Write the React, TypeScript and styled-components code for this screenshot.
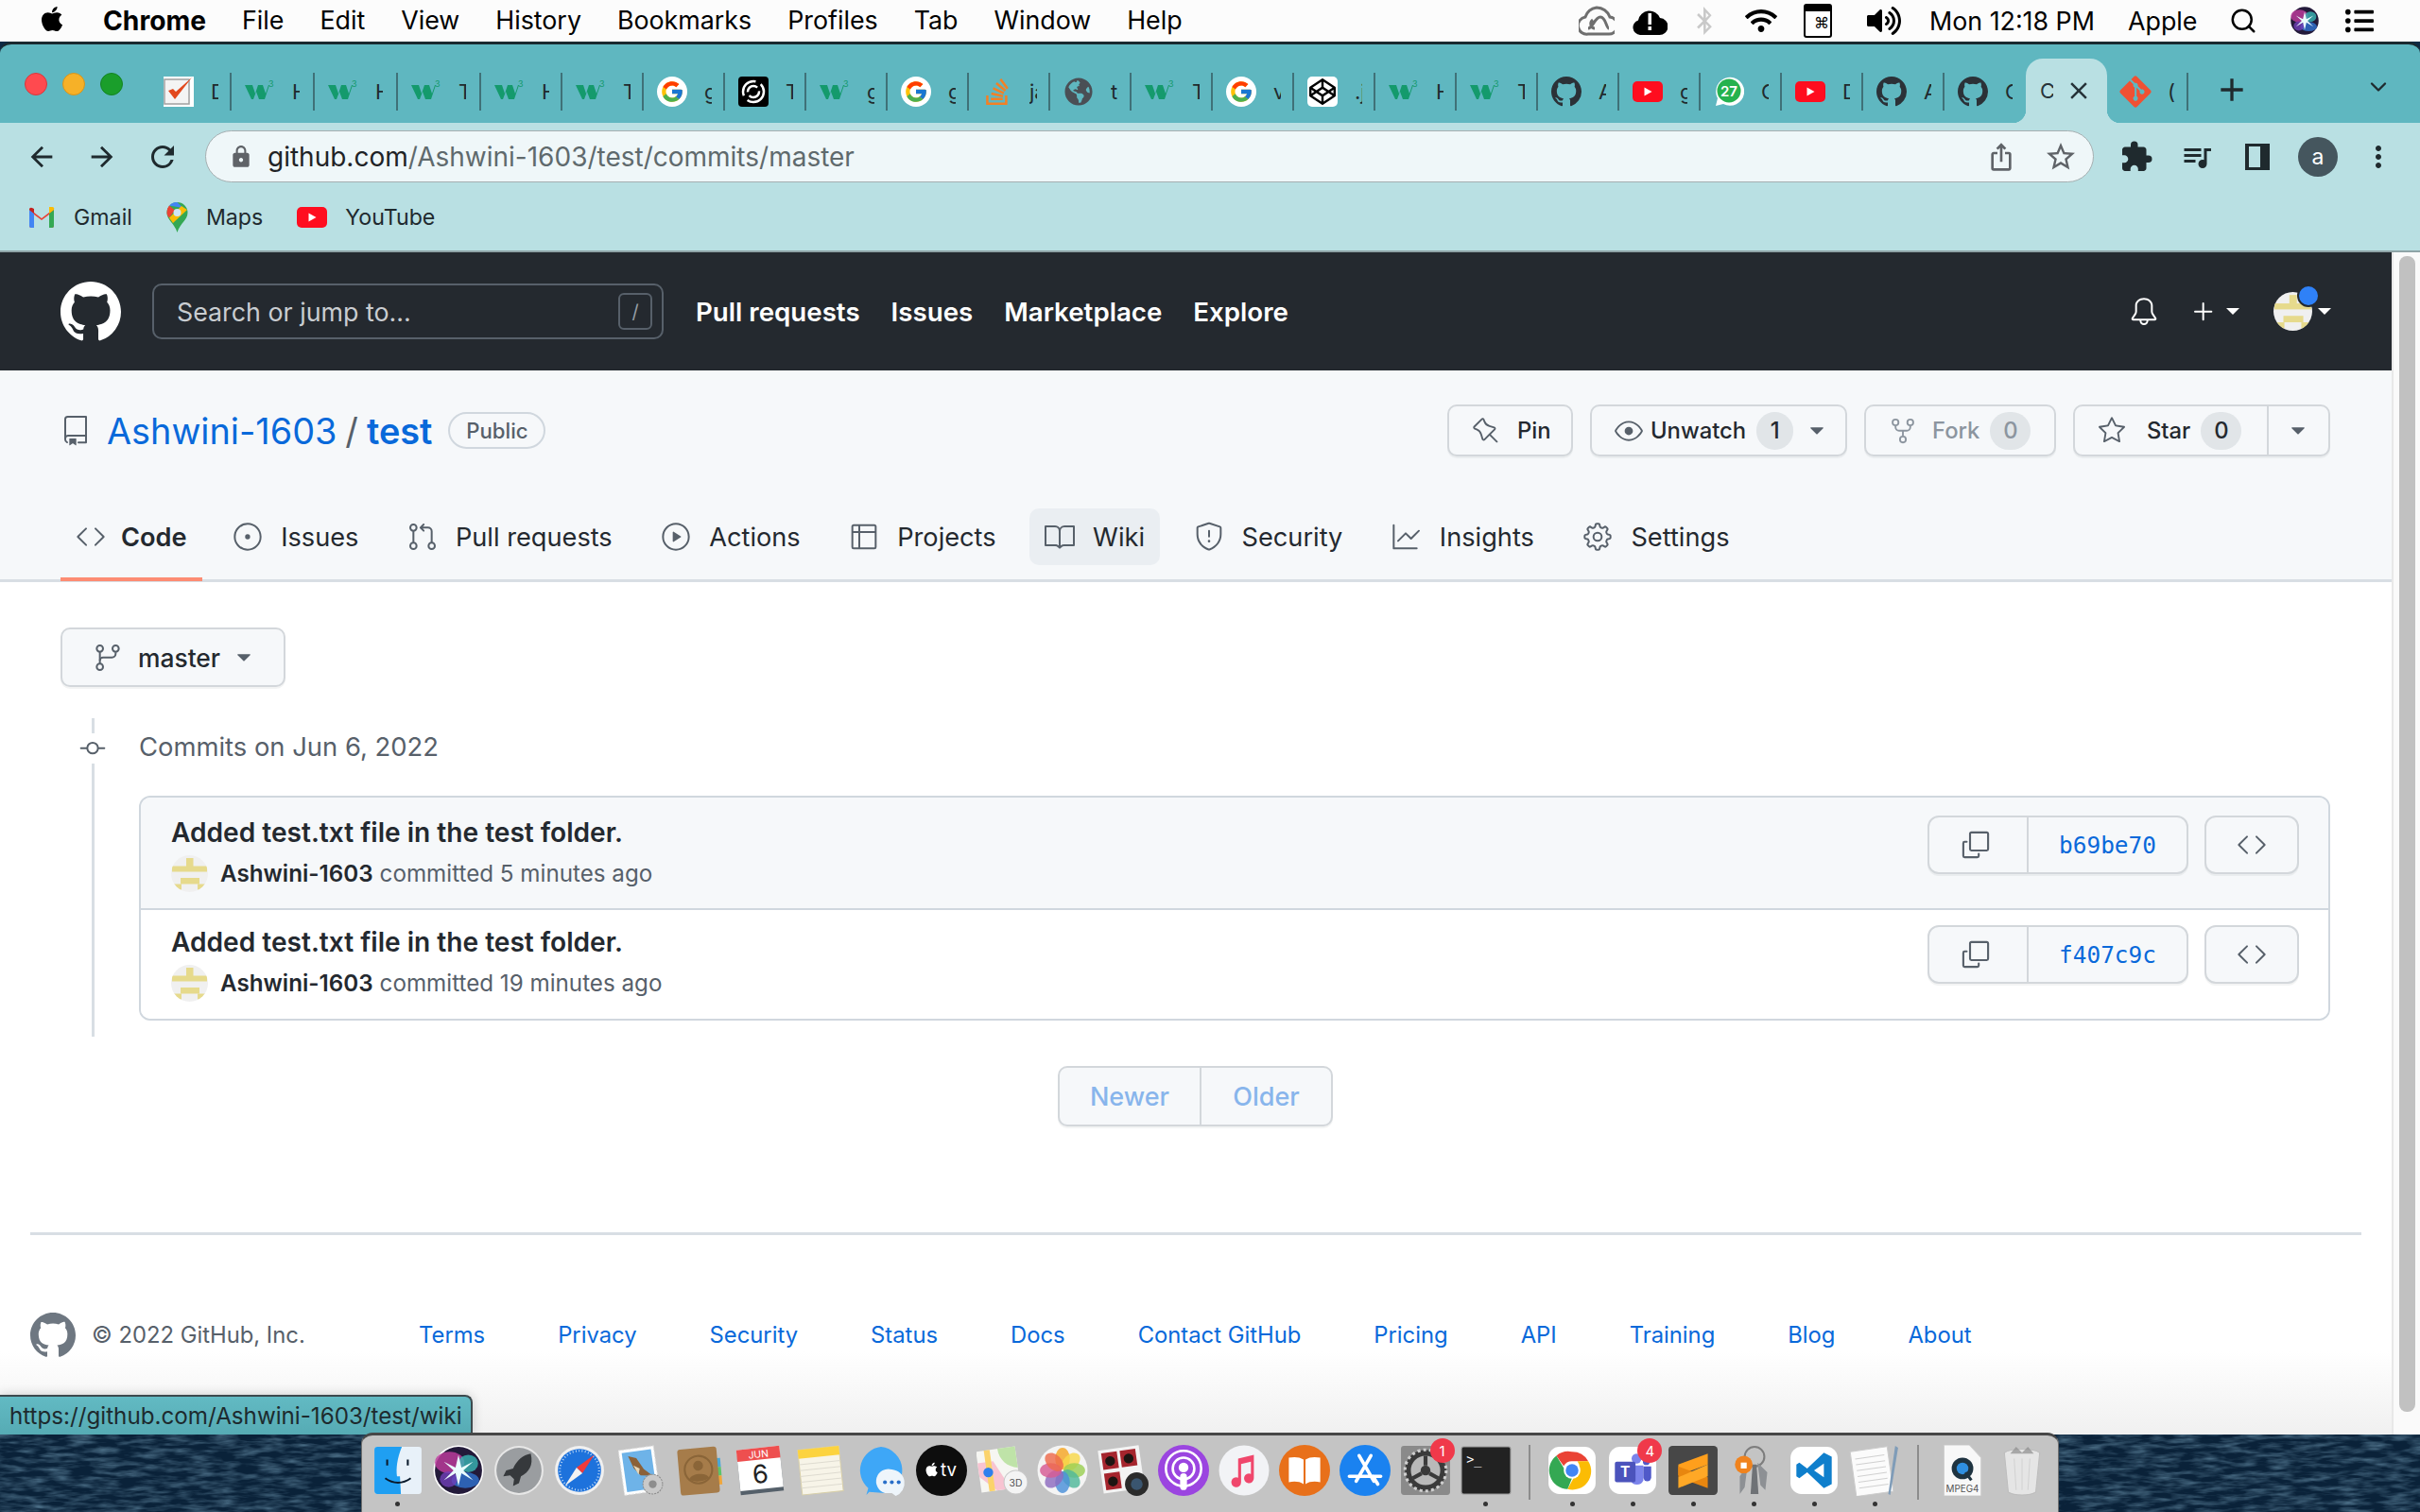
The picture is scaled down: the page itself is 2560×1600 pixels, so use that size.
import React from 'react';
import styled, { createGlobalStyle } from 'styled-components';
import { FaApple, FaWifi, FaBluetoothB, FaVolumeUp, FaListUl, FaCodepen, FaStackOverflow, FaGitAlt, FaGlobeAmericas } from 'react-icons/fa';
import { FcGoogle } from 'react-icons/fc';
import { FiSearch, FiChevronDown } from 'react-icons/fi';
import { MdArrowBack, MdArrowForward, MdRefresh, MdLock, MdExtension, MdQueueMusic, MdMoreVert, MdAdd, MdClose, MdStarBorder, MdIosShare } from 'react-icons/md';
import {
  GoBell, GoPlus, GoRepo, GoPin, GoEye, GoRepoForked, GoStar, GoTriangleDown, GoCode, GoIssueOpened,
  GoGitPullRequest, GoPlay, GoTable, GoBook, GoShield, GoGraph, GoGear, GoGitBranch, GoGitCommit, GoCopy,
} from 'react-icons/go';

const Global = createGlobalStyle`
  html, body { margin: 0; padding: 0; background: #0d2a44; }
  * { box-sizing: border-box; }
  body { font-family: Inter, "Liberation Sans", sans-serif; }
  a { text-decoration: none; color: inherit; }
  svg { display: block; flex: none; }
`;

const Screen = styled.div`
  width: 2560px;
  height: 1600px;
  display: flex;
  flex-direction: column;
  overflow: hidden;
`;

/* mac menu bar */
const MenuBar = styled.div`
  height: 44px;
  flex: none;
  background: #fcfcfc;
  display: flex;
  align-items: center;
  padding: 0 0 0 40px;
  font-size: 26.8px;
  color: #000;
`;

const AppleSlot = styled.div`
  margin-top: -4px;
  margin-right: 39px;
`;

const MenuLeft = styled.div`
  display: flex;
  gap: 38px;
`;

const MenuItem = styled.span<{ $bold?: boolean }>`
  font-weight: ${p => (p.$bold ? 700 : 400)};
  font-size: ${p => (p.$bold ? '28.2px' : 'inherit')};
`;

const MenuRight = styled.div`
  margin-left: auto;
  display: flex;
  align-items: center;
`;

const StatusSlot = styled.div<{ $w: number }>`
  width: ${p => p.$w}px;
  display: flex;
  justify-content: center;
  align-items: center;
`;

const Clock = styled.span`
  width: 180px;
  margin-left: 8px;
  white-space: nowrap;
`;

const AppleLabel = styled.span`
  margin-left: 30px;
  width: 89px;
`;

/* browser window */
const Window = styled.div`
  width: 2560px;
  height: 1474px;
  flex: none;
  background: #5fb7c0;
  border-top: 3px solid #1a2a30;
  border-radius: 12px 12px 0 0;
  display: flex;
  flex-direction: column;
  position: relative;
  overflow: hidden;
`;

const TabStrip = styled.div`
  height: 83px;
  flex: none;
  display: flex;
  align-items: flex-end;
`;

const Lights = styled.div`
  display: flex;
  gap: 16px;
  padding: 0 29px 29px 26px;
`;

const Light = styled.span<{ $c: string; $b: string }>`
  width: 24px;
  height: 24px;
  border-radius: 50%;
  background: ${p => p.$c};
  border: 1px solid ${p => p.$b};
`;

const Tab = styled.div<{ $w: number; $sep?: boolean }>`
  width: ${p => p.$w}px;
  height: 53px;
  padding: 0 0 13px 14px;
  display: flex;
  align-items: center;
  position: relative;
  color: #1f2a2e;
  font-size: 22px;
  ${p => (p.$sep === false ? '' : `
    &::after {
      content: '';
      position: absolute;
      right: 0;
      top: 0;
      width: 2px;
      height: 40px;
      background: #3f7178;
    }
  `)}
`;

const ActiveTab = styled.div`
  width: 86px;
  height: 68px;
  padding: 0 0 0 15px;
  position: relative;
  background: #b9e0e3;
  border-radius: 18px 18px 0 0;
  display: flex;
  align-items: center;
  gap: 12px;
  color: #27343a;
  font-size: 22px;
  &::before, &::after {
    content: '';
    position: absolute;
    bottom: 0;
    width: 14px;
    height: 14px;
  }
  &::before {
    left: -14px;
    background: radial-gradient(circle at 0 0, transparent 14px, #b9e0e3 14.5px);
  }
  &::after {
    right: -14px;
    background: radial-gradient(circle at 100% 0, transparent 14px, #b9e0e3 14.5px);
  }
`;

const ActiveTabText = styled.span`
  width: 14px;
  overflow: hidden;
`;

const TabText = styled.span`
  width: 8px;
  margin-left: 18px;
  overflow: hidden;
  white-space: nowrap;
`;

const StripPlus = styled.div`
  padding: 0 0 15px 26px;
`;

const StripChevron = styled.div`
  margin-left: auto;
  padding: 0 30px 24px 0;
`;

const Favicon = styled.div`
  width: 32px;
  height: 32px;
  display: flex;
  align-items: center;
  justify-content: center;
`;

const GoogleFav = styled(Favicon)`
  background: #fff;
  border-radius: 50%;
`;

const CodepenFav = styled(Favicon)`
  background: #fff;
  border-radius: 5px;
`;

/* toolbar */
const Toolbar = styled.div`
  height: 137px;
  flex: none;
  background: #b9e0e3;
  border-bottom: 2px solid #8fa4a7;
`;

const NavRow = styled.div`
  height: 71px;
  display: flex;
  align-items: center;
  padding-left: 28px;
  color: #1f2a2e;
`;

const NavBtn = styled.div`
  width: 32px;
  margin-right: 32px;
  display: flex;
  justify-content: center;
`;

const Omnibox = styled.div`
  width: 1998px;
  height: 55px;
  margin: 0 13px 0 -3px;
  border-radius: 28px;
  background: #eff7f9;
  border: 1px solid #a5aeb0;
  box-shadow: inset 0 0 0 1px #eff7f9;
  display: flex;
  align-items: center;
  padding: 0 3px 0 24px;
  font-size: 28px;
  color: #5f6a6d;
`;

const Url = styled.span`
  margin-left: 15px;
  flex: 1;
`;

const UrlHost = styled.span`
  color: #1f2326;
`;

const OmniAction = styled.div`
  width: 63px;
  display: flex;
  justify-content: center;
  color: #5f6368;
`;

const ToolSlot = styled.div`
  width: 64px;
  display: flex;
  justify-content: center;
  color: #1f2a2e;
`;

const PanelIcon = styled.div`
  width: 26px;
  height: 28px;
  border: 3px solid #1f2a2e;
  border-left-width: 4px;
  border-right-width: 10px;
`;

const ProfileDot = styled.div`
  width: 42px;
  height: 42px;
  border-radius: 50%;
  background: #45565e;
  color: #fff;
  font-size: 23px;
  display: flex;
  align-items: center;
  justify-content: center;
`;

const BookmarkRow = styled.div`
  display: flex;
  align-items: center;
  height: 58px;
  padding-left: 29px;
  font-size: 23.2px;
  color: #1f2a2e;
`;

const Bookmark = styled.a`
  display: flex;
  align-items: center;
  gap: 19px;
  margin-right: 36px;
`;

/* page */
const PageRow = styled.div`
  flex: 1;
  display: flex;
  min-height: 0;
`;

const Page = styled.div`
  width: 2530px;
  display: flex;
  flex-direction: column;
  position: relative;
  background: linear-gradient(#fff 93%, #f0f0f0 100%);
`;

const ScrollTrack = styled.div`
  width: 30px;
  background: #fafafa;
  border-left: 2px solid #e8e8e8;
  padding: 4px 5px 24px 6px;
`;

const ScrollThumb = styled.div`
  height: 100%;
  background: #c1c1c1;
  border-radius: 8px;
`;

const Header = styled.header`
  height: 125px;
  flex: none;
  background: #24292f;
  display: flex;
  align-items: center;
  padding: 0 64px 0 64px;
  color: #fff;
`;

const Search = styled.div`
  width: 541px;
  height: 59px;
  margin: 0 34px 0 33px;
  border: 2px solid #57606a;
  border-radius: 10px;
  display: flex;
  align-items: center;
  justify-content: space-between;
  padding: 0 10px 0 24px;
  font-size: 26.8px;
  color: #c9cdd1;
`;

const SlashKey = styled.span`
  width: 36px;
  height: 39px;
  border: 2px solid #57606a;
  border-radius: 6px;
  display: flex;
  align-items: center;
  justify-content: center;
  font-size: 20px;
  color: #959da5;
`;

const HeaderNav = styled.nav`
  display: flex;
  gap: 33px;
  font-size: 27.7px;
  font-weight: 600;
`;

const HeaderRight = styled.div`
  margin-left: auto;
  display: flex;
  align-items: center;
`;

const HeadCaret = styled.span<{ $gap: number }>`
  margin-left: ${p => p.$gap}px;
  width: 0;
  height: 0;
  border: 7px solid transparent;
  border-top-color: #fff;
  border-bottom: 0;
`;

const PlusGroup = styled.div`
  display: flex;
  align-items: center;
  margin: 0 36px 0 31px;
`;

const HeadAvatar = styled.div`
  position: relative;
`;

const UnreadDot = styled.span`
  position: absolute;
  right: -8px;
  top: -8px;
  width: 24px;
  height: 24px;
  border-radius: 50%;
  background: #2f81f7;
  border: 2px solid #24292f;
`;

const RepoHead = styled.div`
  height: 224px;
  flex: none;
  background: #f6f8fa;
  border-bottom: 3px solid #d8dee4;
  padding: 36px 65px 0 64px;
  display: flex;
  flex-direction: column;
`;

const RepoTop = styled.div`
  display: flex;
  align-items: center;
  height: 55px;
  justify-content: space-between;
`;

const RepoTitle = styled.div`
  display: flex;
  align-items: center;
  font-size: 37.8px;
  color: #57606a;
`;

const OwnerLink = styled.a`
  margin-left: 17px;
  color: #0969da;
`;

const TitleSep = styled.span`
  margin: 0 9px 0 9px;
`;

const NameLink = styled.a`
  color: #0969da;
  font-weight: 600;
`;

const PublicBadge = styled.span`
  margin-left: 17px;
  height: 39px;
  width: 103px;
  display: flex;
  align-items: center;
  justify-content: center;
  border: 2px solid #d0d7de;
  border-radius: 20px;
  font-size: 22.2px;
  font-weight: 500;
  color: #57606a;
`;

const RepoActions = styled.div`
  display: flex;
  gap: 18px;
`;

const ActionBtn = styled.button<{ $w: number; $muted?: boolean }>`
  width: ${p => p.$w}px;
  height: 55px;
  padding: 0 0 0 24px;
  background: #f6f8fa;
  border: 2px solid #d3d7db;
  border-radius: 10px;
  box-shadow: 0 2px 0 rgba(27, 31, 36, 0.05);
  display: flex;
  align-items: center;
  font: 500 23.8px Inter, sans-serif;
  color: ${p => (p.$muted ? '#8c959f' : '#24292f')};
`;

const BtnLabel = styled.span<{ $l: number }>`
  margin-left: ${p => p.$l}px;
`;

const Counter = styled.span<{ $l: number; $w: number }>`
  margin-left: ${p => p.$l}px;
  width: ${p => p.$w}px;
  height: 40px;
  border-radius: 20px;
  background: rgba(175, 184, 193, 0.3);
  display: flex;
  align-items: center;
  justify-content: center;
`;

const BtnCaret = styled.span<{ $l: number }>`
  margin-left: ${p => p.$l}px;
  color: #57606a;
`;

const StarSplit = styled.span`
  margin-left: 27px;
  width: 63px;
  height: 51px;
  border-left: 2px solid #d3d7db;
  display: flex;
  align-items: center;
  justify-content: center;
  color: #57606a;
`;

const RepoTabs = styled.nav`
  margin-top: 55px;
  display: flex;
  gap: 19.5px;
  font-size: 27.2px;
  color: #24292f;
`;

const RepoTab = styled.a<{ $active?: boolean; $hover?: boolean }>`
  height: 60px;
  padding: 0 16px;
  display: flex;
  align-items: center;
  gap: ${p => (p.$active ? 16 : 19)}px;
  position: relative;
  border-radius: 10px;
  background: ${p => (p.$hover ? '#eaeef2' : 'transparent')};
  font-weight: ${p => (p.$active ? 600 : 400)};
  svg { color: #57606a; }
  ${p => p.$active && `
    margin-right: -3px;
    &::after {
      content: '';
      position: absolute;
      left: 0;
      right: 0;
      bottom: -17px;
      height: 4px;
      background: #fd8c73;
    }
  `}
`;

const Content = styled.main`
  padding: 48px 65px 0 64px;
`;

const BranchBtn = styled.button`
  width: 238px;
  height: 63px;
  background: #f6f8fa;
  border: 2px solid #d3d7db;
  border-radius: 10px;
  box-shadow: 0 2px 0 rgba(27, 31, 36, 0.05);
  display: flex;
  align-items: center;
  padding-left: 32px;
  font: 500 26.4px Inter, sans-serif;
  color: #24292f;
`;

const BranchName = styled.span`
  margin: 0 12px 0 16px;
`;

const Timeline = styled.div`
  margin-top: 33px;
  padding: 0 0 17px 83px;
  position: relative;
  &::before {
    content: '';
    position: absolute;
    left: 33px;
    top: 0;
    bottom: 0;
    width: 3px;
    background: #d8dee4;
  }
`;

const DayHeader = styled.div`
  height: 60px;
  margin-bottom: 22px;
  display: flex;
  align-items: center;
  font-size: 27.4px;
  color: #57606a;
  position: relative;
`;

const DayIcon = styled.div`
  margin: 4px 33px 0 -65px;
  width: 32px;
  height: 32px;
  background: #fff;
  color: #57606a;
`;

const CommitBox = styled.div`
  border: 2px solid #d0d7de;
  border-radius: 12px;
  overflow: hidden;
`;

const CommitRow = styled.div<{ $first?: boolean }>`
  display: flex;
  justify-content: space-between;
  padding: ${p => (p.$first ? '19px 31px 17px 32px' : '16px 31px 18px 32px')};
  background: ${p => (p.$first ? '#f6f8fa' : '#fff')};
  border-top: ${p => (p.$first ? 'none' : '2px solid #d0d7de')};
`;

const CommitTitle = styled.a`
  display: block;
  height: 36px;
  line-height: 36px;
  font-size: 28.1px;
  font-weight: 600;
  color: #24292f;
`;

const CommitMeta = styled.div`
  margin-top: 6px;
  height: 39px;
  display: flex;
  align-items: center;
  font-size: 24.2px;
  color: #57606a;
`;

const Author = styled.a`
  margin: 0 7px 0 13px;
  font-weight: 600;
  color: #24292f;
`;

const CommitActions = styled.div`
  display: flex;
  gap: 17px;
`;

const BtnGroup = styled.div`
  width: 276px;
  height: 62px;
  display: flex;
  background: #f6f8fa;
  border: 2px solid #d3d7db;
  border-radius: 12px;
  box-shadow: 0 2px 0 rgba(27, 31, 36, 0.05);
`;

const CopyCell = styled.div`
  width: 105px;
  padding-right: 6px;
  border-right: 2px solid #d3d7db;
  display: flex;
  align-items: center;
  justify-content: center;
  color: #57606a;
`;

const ShaCell = styled.a`
  flex: 1;
  display: flex;
  align-items: center;
  justify-content: center;
  font: 24.4px "DejaVu Sans Mono", monospace;
  color: #0969da;
`;

const CodeBtn = styled.div`
  width: 100px;
  height: 62px;
  background: #f6f8fa;
  border: 2px solid #d3d7db;
  border-radius: 12px;
  box-shadow: 0 2px 0 rgba(27, 31, 36, 0.05);
  display: flex;
  align-items: center;
  justify-content: center;
  color: #57606a;
`;

const Pager = styled.div`
  margin: 31px auto 0;
  width: 291px;
  height: 64px;
  display: flex;
  background: #f6f8fa;
  border: 2px solid #d3d7db;
  border-radius: 10px;
  box-shadow: 0 2px 0 rgba(27, 31, 36, 0.05);
  font-size: 27px;
  font-weight: 500;
  color: #88b5ec;
`;

const PagerCell = styled.span<{ $w: number; $line?: boolean }>`
  width: ${p => p.$w}px;
  display: flex;
  align-items: center;
  justify-content: center;
  border-right: ${p => (p.$line ? '2px solid #d3d7db' : 'none')};
`;

const Footer = styled.footer`
  margin: 112px 32px 0;
  border-top: 3px solid #d8dee4;
  padding-top: 81px;
  display: flex;
  align-items: center;
  font-size: 23.8px;
  line-height: 50px;
  color: #57606a;
`;

const FooterCopy = styled.span`
  margin-left: 17px;
  width: 346px;
`;

const FooterLinks = styled.div`
  display: flex;
  gap: 77px;
  color: #0969da;
`;

const StatusTip = styled.div`
  position: absolute;
  left: 0;
  bottom: 0;
  width: 500px;
  height: 42px;
  padding-left: 10px;
  background: linear-gradient(#62bac3, #56abb4);
  border-top: 2px solid #3d4a4e;
  border-right: 2px solid #3d4a4e;
  border-radius: 0 8px 0 0;
  box-shadow: 0 0 12px rgba(0, 0, 0, 0.18);
  display: flex;
  align-items: center;
  font-size: 24.2px;
  color: #1d2a2e;
`;

/* wallpaper and dock */
const Desktop = styled.div`
  flex: 1;
  display: flex;
  justify-content: center;
  position: relative;
  background-color: #0a2239;
`;

const WallpaperArt = styled.svg`
  position: absolute;
  inset: 0;
  width: 100%;
  height: 100%;
`;

const Dock = styled.div`
  width: 1796px;
  height: 85px;
  margin-top: -2px;
  padding: 10px 6px 0;
  display: flex;
  position: relative;
  background: #c4c4c4;
  border-top: 3px solid #474747;
  border-left: 1px solid #6e6e6e;
  border-right: 1px solid #6e6e6e;
  border-radius: 12px 12px 0 0;
`;

const DockSlot = styled.div`
  width: 64px;
  display: flex;
  flex-direction: column;
  align-items: center;
  position: relative;
`;

const DockDot = styled.span`
  width: 5px;
  height: 5px;
  margin-top: 6px;
  border-radius: 50%;
  background: #333;
`;

const DockBadge = styled.span`
  position: absolute;
  right: 1px;
  top: -7px;
  width: 26px;
  height: 26px;
  border-radius: 50%;
  background: #f0394a;
  color: #fff;
  font-size: 15px;
  display: flex;
  align-items: center;
  justify-content: center;
`;

const DockDivider = styled.div`
  width: 28px;
  display: flex;
  justify-content: center;
  &::after {
    content: '';
    width: 2px;
    height: 58px;
    background: #8c8c8c;
  }
`;

const DockSvg: React.FC<{ children: React.ReactNode }> = ({ children }) => (
  <svg width="54" height="54" viewBox="0 0 52 52">{children}</svg>
);

const OctoMark: React.FC<{ size: number; color?: string }> = ({ size, color = 'currentColor' }) => (
  <svg width={size} height={size} viewBox="0 0 16 16" fill={color}>
    <path d="M8 0C3.58 0 0 3.58 0 8c0 3.54 2.29 6.53 5.47 7.59.4.07.55-.17.55-.38 0-.19-.01-.82-.01-1.49-2.01.37-2.53-.49-2.69-.94-.09-.23-.48-.94-.82-1.13-.28-.15-.68-.52-.01-.53.63-.01 1.08.58 1.23.82.72 1.21 1.87.87 2.33.66.07-.52.28-.87.51-1.07-1.78-.2-3.64-.89-3.64-3.95 0-.87.31-1.59.82-2.15-.08-.2-.36-1.02.08-2.12 0 0 .67-.21 2.2.82.64-.18 1.32-.27 2-.27.68 0 1.36.09 2 .27 1.53-1.04 2.2-.82 2.2-.82.44 1.1.16 1.92.08 2.12.51.56.82 1.27.82 2.15 0 3.07-1.87 3.75-3.65 3.95.29.25.54.73.54 1.48 0 1.07-.01 1.93-.01 2.2 0 .21.15.46.55.38A8.013 8.013 0 0016 8c0-4.42-3.58-8-8-8z" />
  </svg>
);

const W3Fav = () => (
  <svg width="32" height="32" viewBox="0 0 32 32">
    <path d="M0 9h8l3 9 3-9h5l3 9 3-9h1l-5 15h-6l-3-8-3 8H7z" fill="#149a6c" />
    <text x="25" y="11" fontSize="9" fill="#149a6c" fontFamily="Inter">3</text>
  </svg>
);

const TodoFav = () => (
  <svg width="32" height="32" viewBox="0 0 32 32">
    <rect width="32" height="32" fill="#fff" />
    <rect x="1" y="3" width="26" height="26" fill="#f4f4f4" stroke="#a0a0a0" strokeWidth="1.5" />
    <path d="M5 15l7 9L30 1l-17 15-3-3z" fill="#e2491e" />
  </svg>
);

const SwirlFav = () => (
  <svg width="32" height="32" viewBox="0 0 32 32">
    <rect width="32" height="32" rx="4" fill="#000" />
    <circle cx="16" cy="16" r="11" fill="none" stroke="#fff" strokeWidth="2.5" strokeDasharray="24 6" />
    <circle cx="16" cy="16" r="6" fill="none" stroke="#fff" strokeWidth="2.5" strokeDasharray="14 4" />
  </svg>
);

const YoutubeIcon: React.FC<{ w?: number; h?: number }> = ({ w = 32, h = 22 }) => (
  <svg width={w} height={h} viewBox="0 0 32 22">
    <rect width="32" height="22" rx="5" fill="#ff0d1f" />
    <path d="M12.5 6.5l8 4.5-8 4.5z" fill="#fff" />
  </svg>
);

const YtFav = () => <YoutubeIcon w={32} h={22} />;

const WhatsFav = () => (
  <svg width="32" height="36" viewBox="0 0 32 36">
    <path d="M2 33l2-8a15 15 0 1 1 6 6z" fill="#fff" />
    <circle cx="16" cy="17" r="12.5" fill="#25b24f" />
    <text x="16" y="22.5" textAnchor="middle" fontSize="15" fontWeight="600" fill="#fff" fontFamily="Inter">27</text>
  </svg>
);

const GmailIcon = () => (
  <svg width="30" height="24" viewBox="0 0 30 24">
    <path d="M2 3l13 10L28 3v18a2 2 0 0 1-2 2h-3V9l-8 6-8-6v14H4a2 2 0 0 1-2-2z" fill="#ea4335" />
    <path d="M2 4v17a2 2 0 0 0 2 2h3V8z" fill="#4285f4" />
    <path d="M28 4v17a2 2 0 0 1-2 2h-3V8z" fill="#34a853" />
    <path d="M23 1h3a2 2 0 0 1 2 3l-5 4z" fill="#fbbc04" />
    <path d="M2 4a2 2 0 0 1 3-2l2 1v5z" fill="#c5221f" />
  </svg>
);

const MapsIcon = () => (
  <svg width="23" height="32" viewBox="0 0 23 32">
    <path d="M11.5 0a11 11 0 0 1 11 11c0 8-8 11-11 21C8.500 22 .5 19 .5 11a11 11 0 0 1 11-11z" fill="#34a853" />
    <path d="M3 3.500A11 11 0 0 1 11.500 0l6 6z" fill="#4285f4" />
    <path d="M.5 11A11 11 0 0 1 3 3.500l6 5-6 8c-1.500-1.500-2.500-3.500-2.500-5.500z" fill="#ea4335" />
    <path d="M3 16.500L16 4l6 4-15 14z" fill="#fbbc04" />
    <circle cx="11.500" cy="11" r="4" fill="#cfe6f5" />
  </svg>
);

const Identicon: React.FC<{ size: number }> = ({ size }) => (
  <svg width={size} height={size} viewBox="0 0 39 39">
    <clipPath id={`av${size}`}><circle cx="19.500" cy="19.500" r="19.500" /></clipPath>
    <g clipPath={`url(#av${size})`}>
      <rect width="39" height="39" fill="#f0f0f0" />
      <rect x="16" y="3" width="7.500" height="9" fill="#e6da8c" />
      <rect x="1" y="11.500" width="37" height="6" fill="#e6da8c" />
      <rect x="10" y="24" width="20" height="6.500" fill="#e6da8c" />
      <rect x="3" y="30.500" width="8" height="6" fill="#e6da8c" />
      <rect x="28" y="30.500" width="8" height="6" fill="#e6da8c" />
    </g>
  </svg>
);

const SiriOrb: React.FC<{ size: number }> = ({ size }) => (
  <svg width={size} height={size} viewBox="0 0 52 52">
    <circle cx="26" cy="26" r="25.500" fill="#fff" />
    <circle cx="26" cy="26" r="24" fill="#231a3a" />
    <ellipse cx="17" cy="18" rx="15" ry="11" fill="#b83b9a" opacity=".85" />
    <ellipse cx="33" cy="36" rx="14" ry="8" fill="#2f6fc9" opacity=".85" />
    <ellipse cx="36" cy="19" rx="10" ry="9" fill="#38b6b5" opacity=".8" />
    <ellipse cx="16" cy="35" rx="9" ry="8" fill="#6f3fb8" opacity=".8" />
    <path d="M26 10l3 13 12-6-10 9 10 10-12-7-3 13-3-13-12 7 10-10-10-9 12 6z" fill="#eafcff" />
  </svg>
);

const Finder = () => (
  <DockSvg>
    <rect x="2" y="2" width="48" height="48" rx="3" fill="#e8f1f9" />
    <path d="M5 2h25c-5 12-6 22-5 30h3l1 18H5a3 3 0 0 1-3-3V5a3 3 0 0 1 3-3z" fill="#1f9ff2" />
    <path d="M13 34c8 6 18 6 26 0" fill="none" stroke="#0b1b2c" strokeWidth="1.800" />
    <path d="M15 15v6M36 15v6" stroke="#0b1b2c" strokeWidth="2" />
  </DockSvg>
);

const Launchpad = () => (
  <DockSvg>
    <circle cx="26" cy="26" r="25" fill="#e7e7e7" />
    <circle cx="26" cy="26" r="23" fill="#9a9da0" />
    <path d="M38 9c-8 1-14 7-18 15l-7 2-3 6 7-1 4 4-1 7 6-3 2-7c8-4 13-11 10-23z" fill="#36393c" />
  </DockSvg>
);

const Safari = () => (
  <DockSvg>
    <circle cx="26" cy="26" r="25" fill="#f0f0f0" />
    <circle cx="26" cy="26" r="22" fill="#1d72dc" />
    <circle cx="26" cy="26" r="20" fill="none" stroke="#bcd7f5" strokeWidth="2" strokeDasharray="1 2.200" />
    <path d="M41 10L23 23l6 6z" fill="#f03a3a" />
    <path d="M11 42l12-19 6 6z" fill="#f2f2f2" />
  </DockSvg>
);

const Mail = () => (
  <DockSvg>
    <g transform="rotate(-8 26 26)">
      <rect x="7" y="3" width="36" height="46" fill="#fff" stroke="#ddd" strokeDasharray="2 1.500" />
      <rect x="10" y="6" width="30" height="40" fill="#6eb3e8" />
      <path d="M16 10l8 3 6 12 8 8-12-2-6-8z" fill="#8b6138" />
      <path d="M20 20l6 4-2 6z" fill="#e5d6b8" />
    </g>
    <circle cx="39" cy="40" r="10" fill="#c9c9c9" stroke="#8d8d8d" strokeDasharray="2 1" />
    <circle cx="39" cy="40" r="4" fill="#8d8d8d" />
  </DockSvg>
);

const Contacts = () => (
  <DockSvg>
    <g transform="rotate(-5 26 26)">
      <rect x="43" y="15" width="4" height="9" fill="#4aa8d8" />
      <rect x="43" y="24" width="4" height="9" fill="#5cc36a" />
      <rect x="43" y="33" width="4" height="9" fill="#f0a63a" />
      <rect x="4" y="3" width="40" height="47" rx="3" fill="#a67c4a" />
      <circle cx="24" cy="25" r="14" fill="none" stroke="#8a6538" strokeWidth="2" />
      <circle cx="24" cy="21" r="5" fill="#8a6538" />
      <path d="M14 34c2-6 18-6 20 0-4 4-16 4-20 0z" fill="#8a6538" />
    </g>
  </DockSvg>
);

const Calendar = () => (
  <DockSvg>
    <g transform="rotate(-6 26 26)">
      <rect x="4" y="8" width="44" height="41" fill="#55606a" />
      <rect x="4" y="3" width="44" height="42" fill="#fff" />
      <rect x="4" y="3" width="44" height="12" fill="#ee4f4f" />
      <text x="26" y="13" textAnchor="middle" fontSize="10" fill="#fff" fontFamily="Inter">JUN</text>
      <text x="26" y="39" textAnchor="middle" fontSize="26" fill="#222" fontFamily="Inter">6</text>
    </g>
  </DockSvg>
);

const Notes = () => (
  <DockSvg>
    <g transform="rotate(-6 26 26)">
      <rect x="5" y="3" width="42" height="46" fill="#f7f4e8" stroke="#d8cfa8" />
      <rect x="5" y="3" width="42" height="9" fill="#fcd33f" />
      <path d="M5 18h42M5 24h42M5 30h42M5 36h42M5 42h42" stroke="#dedbd0" />
    </g>
  </DockSvg>
);

const Messages = () => (
  <DockSvg>
    <path d="M26 2a24 24 0 0 1 4 47l-16-1-3 3 2-7A24 24 0 0 1 26 2z" fill="#3ea7f7" />
    <path d="M37 25a14 14 0 0 1 4 27l-4-3H30a12 12 0 0 1 7-24z" fill="#eef5fb" />
    <circle cx="30" cy="38" r="2" fill="#2a6fc9" />
    <circle cx="37" cy="38" r="2" fill="#2a6fc9" />
    <circle cx="44" cy="38" r="2" fill="#2a6fc9" />
  </DockSvg>
);

const AppleTv = () => (
  <DockSvg>
    <circle cx="26" cy="26" r="26" fill="#0d0d0d" />
    <g transform="translate(8 17)"><FaApple size={16} color="#fff" /></g>
    <text x="25" y="32" fontSize="18" fill="#fff" fontFamily="Inter">tv</text>
  </DockSvg>
);

const Maps = () => (
  <DockSvg>
    <g transform="rotate(-8 22 24)">
      <rect x="2" y="4" width="40" height="42" fill="#f6f6f2" />
      <path d="M24 4h18v22c-10-2-18-10-18-22z" fill="#bfe3a8" />
      <path d="M2 16h16l14 30H18L2 30z" fill="#f8c4d2" />
      <path d="M10 4h6v42h-6z" fill="#fbd36b" />
    </g>
    <circle cx="12" cy="28" r="5" fill="#2f80ed" />
    <circle cx="40" cy="38" r="12" fill="#f4f4f4" stroke="#c8c8c8" />
    <text x="40" y="42" textAnchor="middle" fontSize="10" fill="#555" fontFamily="Inter">3D</text>
  </DockSvg>
);

const Photos = () => {
  const colors = ['#f5a623', '#f8d84a', '#9bcf53', '#4fb89a', '#4a90d9', '#8e6bbf', '#d75a94', '#ee6a4c'];
  return (
    <DockSvg>
      <circle cx="26" cy="26" r="25.500" fill="#f4f4f4" />
      {colors.map((c, i) => (
        <ellipse key={c} cx="26" cy="14" rx="7.500" ry="11" fill={c} opacity=".82" transform={`rotate(${i * 45} 26 26)`} />
      ))}
    </DockSvg>
  );
};

const PhotoBooth = () => (
  <DockSvg>
    <g transform="rotate(-8 24 24)">
      <rect x="3" y="3" width="42" height="44" fill="#f3f3f3" />
      <rect x="6" y="6" width="16" height="17" fill="#a5252d" />
      <rect x="25" y="6" width="16" height="17" fill="#a5252d" />
      <rect x="6" y="27" width="16" height="17" fill="#a5252d" />
      <circle cx="14" cy="15" r="5" fill="#1e1512" />
      <circle cx="33" cy="15" r="5" fill="#1e1512" />
      <circle cx="14" cy="36" r="5" fill="#1e1512" />
    </g>
    <circle cx="40" cy="40" r="12" fill="#2b2b2b" />
    <circle cx="40" cy="40" r="6" fill="#3a556f" />
  </DockSvg>
);

const Podcasts = () => (
  <DockSvg>
    <circle cx="26" cy="26" r="26" fill="#9b45e0" />
    <circle cx="26" cy="24" r="18" fill="none" stroke="#fff" strokeWidth="2.500" />
    <circle cx="26" cy="24" r="11" fill="none" stroke="#fff" strokeWidth="2.500" />
    <circle cx="26" cy="23" r="5" fill="#fff" />
    <rect x="22.500" y="29" width="7" height="17" rx="3.500" fill="#fff" />
  </DockSvg>
);

const Music = () => (
  <DockSvg>
    <circle cx="26" cy="26" r="25.500" fill="#f2f3f6" />
    <path d="M20 14l16-4v24a5 5 0 1 1-3-4.500V17l-10 2.500V38a5 5 0 1 1-3-4.500z" fill="#f0476c" />
  </DockSvg>
);

const Books = () => (
  <DockSvg>
    <circle cx="26" cy="26" r="26" fill="#e8701a" />
    <path d="M25 15c-4-3-10-3-15-2v25c5-1 11-1 15 2zM27 15c4-3 10-3 15-2v25c-5-1-11-1-15 2z" fill="#fff" />
  </DockSvg>
);

const AppStore = () => (
  <DockSvg>
    <circle cx="26" cy="26" r="26" fill="#1a82f0" />
    <path d="M20 11l15 26M32 11L17 37M10 32h32M34 32l5 8" stroke="#fff" strokeWidth="3.500" strokeLinecap="round" fill="none" />
  </DockSvg>
);

const Prefs = () => (
  <DockSvg>
    <rect x="1" y="1" width="50" height="50" rx="3" fill="#8a8a8a" />
    <circle cx="26" cy="26" r="21" fill="#3a3a3a" />
    <circle cx="26" cy="26" r="15" fill="#b9b9b9" />
    <circle cx="26" cy="26" r="5" fill="#3a3a3a" />
    <path d="M26 11v10M13 34l9-5M39 34l-9-5" stroke="#3a3a3a" strokeWidth="4" />
    <circle cx="26" cy="26" r="21" fill="none" stroke="#cfcfcf" strokeWidth="3" strokeDasharray="3 3" />
  </DockSvg>
);

const Terminal = () => (
  <DockSvg>
    <rect x="1" y="2" width="50" height="48" rx="2" fill="#222" stroke="#999" />
    <text x="6" y="19" fontSize="13" fill="#fff" fontFamily="DejaVu Sans Mono">{'>_'}</text>
  </DockSvg>
);

const Chrome = () => (
  <DockSvg>
    <rect x="2" y="2" width="48" height="48" rx="11" fill="#fff" />
    <path d="M26 7a19 19 0 0 1 16.500 9.500H26a9.500 9.500 0 0 0-8.500 5L10 11a19 19 0 0 1 16-4z" fill="#ea4335" />
    <path d="M10 11l8.500 14a9 9 0 0 0 9 5l-6 15A19 19 0 0 1 10 11z" fill="#34a853" />
    <path d="M42.500 16.500A19 19 0 0 1 21.500 45l8-15a9.500 9.500 0 0 0 2-13.500z" fill="#fbbc04" />
    <circle cx="26" cy="26" r="8.500" fill="#fff" />
    <circle cx="26" cy="26" r="6.500" fill="#4285f4" />
  </DockSvg>
);

const Teams = () => (
  <DockSvg>
    <rect x="2" y="2" width="48" height="48" rx="11" fill="#fff" />
    <circle cx="30" cy="14" r="5" fill="#7b83eb" />
    <circle cx="40" cy="17" r="3.500" fill="#5059c9" />
    <path d="M24 21h13v15a7 7 0 0 1-13 0z" fill="#7b83eb" />
    <path d="M37 22h8v11a4 4 0 0 1-8 0z" fill="#5059c9" />
    <rect x="8" y="17" width="21" height="21" rx="2" fill="#4b53bc" />
    <text x="18.500" y="33" textAnchor="middle" fontSize="15" fontWeight="700" fill="#fff" fontFamily="Inter">T</text>
  </DockSvg>
);

const Sublime = () => (
  <DockSvg>
    <rect x="1" y="1" width="50" height="50" rx="4" fill="#474747" />
    <path d="M41 9L11 20v11l30-11z" fill="#ff9f1c" />
    <path d="M11 22l30 11v11L11 33z" fill="#e8860f" />
    <path d="M41 20v12L11 44V33z" fill="#ffa826" />
  </DockSvg>
);

const Keychain = () => (
  <DockSvg>
    <circle cx="27" cy="12" r="10" fill="none" stroke="#7d7d7d" strokeWidth="2" />
    <path d="M30 18l10 10-2 18-5-5zM20 20l-8 12 0 18 5-7z" fill="#8d9094" />
    <path d="M25 20h4l2 30h-8z" fill="#6f7276" />
    <circle cx="16" cy="20" r="9" fill="#f0831e" />
    <rect x="13" y="18" width="6" height="6" fill="#fff" />
  </DockSvg>
);

const VsCode = () => (
  <DockSvg>
    <rect x="2" y="2" width="48" height="48" rx="11" fill="#fff" />
    <path d="M36 8l8 4v28l-8 4-17-16-8 6-3-2v-12l3-2 8 6zm0 11l-10 7 10 7z" fill="#0f7fcc" />
  </DockSvg>
);

const TextEdit = () => (
  <DockSvg>
    <g transform="rotate(-8 24 26)">
      <rect x="4" y="4" width="38" height="46" fill="#fbfbfb" stroke="#ccc" />
      <path d="M8 12h30M8 18h30M8 24h30M8 30h30M8 36h30M8 42h30" stroke="#d0d0d0" />
    </g>
    <path d="M47 1l3 2-8 48-2-1z" fill="#7f9cb8" />
  </DockSvg>
);

const Mpeg = () => (
  <DockSvg>
    <path d="M8 0h26l12 13v39H8z" fill="#f8f8f8" stroke="#ccc" />
    <circle cx="27" cy="24" r="11" fill="#1e3340" />
    <circle cx="27" cy="24" r="6" fill="#2f8fe0" />
    <path d="M30 28l6 8" stroke="#1e3340" strokeWidth="3" />
    <text x="27" y="48" textAnchor="middle" fontSize="9.500" fill="#555" fontFamily="Inter">MPEG4</text>
  </DockSvg>
);

const Trash = () => (
  <DockSvg>
    <path d="M8 8c6-5 30-5 36 0l-4 40c-6 4-22 4-28 0z" fill="#e5e5e5" stroke="#bdbdbd" />
    <path d="M14 9l6-7 6 6 6-6 6 7z" fill="#8d8d8d" opacity=".7" />
    <path d="M18 14l2 32M26 14v32M34 14l-2 32" stroke="#d2d2d2" />
  </DockSvg>
);

const CloudAlert = () => (
  <svg width="38" height="32" viewBox="0 0 38 32">
    <path d="M9 31a8 8 0 0 1-2-15.600A12 12 0 0 1 30 13a9 9 0 0 1-1 18z" fill="#000" />
    <rect x="17.500" y="8" width="3.500" height="12" fill="#fff" />
    <rect x="17.500" y="22" width="3.500" height="4" fill="#fff" />
  </svg>
);

const CreativeCloud = () => (
  <svg width="38" height="34" viewBox="0 0 38 34">
    <path d="M19 3a15 15 0 0 1 14 10 9 9 0 0 1-2 18H10A9 9 0 0 1 7 13 15 15 0 0 1 19 3z" fill="none" stroke="#6f6f6f" strokeWidth="3" />
    <path d="M10 25c5 0 7-12 13-12s6 12 9 12M17 25c-4 0-6-6-2-9" fill="none" stroke="#6f6f6f" strokeWidth="3" />
  </svg>
);

const CmdBox = () => (
  <svg width="30" height="36" viewBox="0 0 30 36">
    <rect x="1" y="1" width="28" height="34" rx="2" fill="#fff" stroke="#000" strokeWidth="2" />
    <rect x="1" y="1" width="28" height="7" fill="#000" />
    <text x="19" y="26" textAnchor="middle" fontSize="16" fill="#000" fontFamily="DejaVu Sans">⌘</text>
  </svg>
);

type TabData = { icon: React.ReactNode; text: string; w: number };

const gh = <OctoMark size={32} color="#2b3137" />;
const w3 = <W3Fav />;
const google = <GoogleFav><FcGoogle size={26} /></GoogleFav>;

const tabsBefore: TabData[] = [
  { icon: <TodoFav />, text: 'Daily', w: 86 },
  { icon: w3, text: 'HTML', w: 88 },
  { icon: w3, text: 'HTML', w: 88 },
  { icon: w3, text: 'Tryit', w: 88 },
  { icon: w3, text: 'HTML', w: 86 },
  { icon: w3, text: 'Tryit', w: 86 },
  { icon: google, text: 'git', w: 86 },
  { icon: <SwirlFav />, text: 'Tilde', w: 86 },
  { icon: w3, text: 'git', w: 86 },
  { icon: google, text: 'git', w: 86 },
  { icon: <FaStackOverflow size={32} color="#f48024" />, text: 'java', w: 86 },
  { icon: <FaGlobeAmericas size={30} color="#4a4f55" />, text: 'test', w: 86 },
  { icon: w3, text: 'Tryit', w: 86 },
  { icon: google, text: 'vim', w: 86 },
  { icon: <CodepenFav><FaCodepen size={28} color="#000" /></CodepenFav>, text: '.js', w: 86 },
  { icon: w3, text: 'HTML', w: 86 },
  { icon: w3, text: 'Tryit', w: 86 },
  { icon: gh, text: 'Ashwini', w: 86 },
  { icon: <YtFav />, text: 'git', w: 86 },
  { icon: <WhatsFav />, text: 'Chat', w: 86 },
  { icon: <YtFav />, text: 'Daily', w: 86 },
  { icon: gh, text: 'Ashwini', w: 86 },
  { icon: gh, text: 'C', w: 86 },
];

const repoTabs = [
  { icon: <GoCode size={32} />, label: 'Code', active: true },
  { icon: <GoIssueOpened size={32} />, label: 'Issues' },
  { icon: <GoGitPullRequest size={32} />, label: 'Pull requests' },
  { icon: <GoPlay size={32} />, label: 'Actions' },
  { icon: <GoTable size={32} />, label: 'Projects' },
  { icon: <GoBook size={32} />, label: 'Wiki', hover: true },
  { icon: <GoShield size={32} />, label: 'Security' },
  { icon: <GoGraph size={32} />, label: 'Insights' },
  { icon: <GoGear size={32} />, label: 'Settings' },
];

const commits = [
  { when: '5 minutes ago', sha: 'b69be70' },
  { when: '19 minutes ago', sha: 'f407c9c' },
];

const footerLinks = ['Terms', 'Privacy', 'Security', 'Status', 'Docs', 'Contact GitHub', 'Pricing', 'API', 'Training', 'Blog', 'About'];

const dockMain: { icon: React.ReactNode; dot?: boolean; badge?: string }[] = [
  { icon: <Finder />, dot: true },
  { icon: <SiriOrb size={54} /> },
  { icon: <Launchpad /> },
  { icon: <Safari /> },
  { icon: <Mail /> },
  { icon: <Contacts /> },
  { icon: <Calendar /> },
  { icon: <Notes /> },
  { icon: <Messages /> },
  { icon: <AppleTv /> },
  { icon: <Maps /> },
  { icon: <Photos /> },
  { icon: <PhotoBooth /> },
  { icon: <Podcasts /> },
  { icon: <Music /> },
  { icon: <Books /> },
  { icon: <AppStore /> },
  { icon: <Prefs />, badge: '1' },
  { icon: <Terminal />, dot: true },
];

const dockRunning: typeof dockMain = [
  { icon: <Chrome />, dot: true },
  { icon: <Teams />, dot: true, badge: '4' },
  { icon: <Sublime />, dot: true },
  { icon: <Keychain />, dot: true },
  { icon: <VsCode />, dot: true },
  { icon: <TextEdit />, dot: true },
];

const dockDocs: typeof dockMain = [{ icon: <Mpeg /> }, { icon: <Trash /> }];

const renderDock = (items: typeof dockMain) =>
  items.map((item, i) => (
    <DockSlot key={i}>
      {item.icon}
      {item.dot && <DockDot />}
      {item.badge && <DockBadge>{item.badge}</DockBadge>}
    </DockSlot>
  ));

const App: React.FC = () => (
  <Screen>
    <Global />
    <MenuBar>
      <AppleSlot><FaApple size={30} /></AppleSlot>
      <MenuLeft>
        <MenuItem $bold>Chrome</MenuItem>
        {['File', 'Edit', 'View', 'History', 'Bookmarks', 'Profiles', 'Tab', 'Window', 'Help'].map(m => (
          <MenuItem key={m}>{m}</MenuItem>
        ))}
      </MenuLeft>
      <MenuRight>
        <StatusSlot $w={56}><CreativeCloud /></StatusSlot>
        <StatusSlot $w={56}><CloudAlert /></StatusSlot>
        <StatusSlot $w={60}><FaBluetoothB size={30} color="#c9c9c9" /></StatusSlot>
        <StatusSlot $w={60}><FaWifi size={34} /></StatusSlot>
        <StatusSlot $w={60}><CmdBox /></StatusSlot>
        <StatusSlot $w={80}><FaVolumeUp size={36} /></StatusSlot>
        <Clock>Mon 12:18 PM</Clock>
        <AppleLabel>Apple</AppleLabel>
        <StatusSlot $w={66}><FiSearch size={30} /></StatusSlot>
        <StatusSlot $w={64}><SiriOrb size={32} /></StatusSlot>
        <StatusSlot $w={52}><FaListUl size={30} /></StatusSlot>
        <StatusSlot $w={38} />
      </MenuRight>
    </MenuBar>

    <Window>
      <TabStrip>
        <Lights>
          <Light $c="#ff4a4f" $b="#d9363b" />
          <Light $c="#f6b128" $b="#d5941b" />
          <Light $c="#1a9e2b" $b="#148423" />
        </Lights>
        {tabsBefore.map((t, i) => (
          <Tab key={i} $w={t.w} $sep={i !== tabsBefore.length - 1}>
            <Favicon>{t.icon}</Favicon>
            <TabText>{t.text}</TabText>
          </Tab>
        ))}
        <ActiveTab>
          <ActiveTabText>C</ActiveTabText>
          <MdClose size={30} />
        </ActiveTab>
        <Tab $w={86}>
          <Favicon><FaGitAlt size={38} color="#f05133" /></Favicon>
          <TabText>(</TabText>
        </Tab>
        <StripPlus><MdAdd size={40} color="#1f2a2e" /></StripPlus>
        <StripChevron><FiChevronDown size={28} color="#1f2a2e" /></StripChevron>
      </TabStrip>

      <Toolbar>
        <NavRow>
          <NavBtn><MdArrowBack size={34} /></NavBtn>
          <NavBtn><MdArrowForward size={34} /></NavBtn>
          <NavBtn><MdRefresh size={36} /></NavBtn>
          <Omnibox>
            <MdLock size={26} color="#5f6368" />
            <Url><UrlHost>github.com</UrlHost>/Ashwini-1603/test/commits/master</Url>
            <OmniAction><MdIosShare size={32} /></OmniAction>
            <OmniAction><MdStarBorder size={36} /></OmniAction>
          </Omnibox>
          <ToolSlot><MdExtension size={36} /></ToolSlot>
          <ToolSlot><MdQueueMusic size={36} /></ToolSlot>
          <ToolSlot><PanelIcon /></ToolSlot>
          <ToolSlot><ProfileDot>a</ProfileDot></ToolSlot>
          <ToolSlot><MdMoreVert size={36} /></ToolSlot>
        </NavRow>
        <BookmarkRow>
          <Bookmark><GmailIcon />Gmail</Bookmark>
          <Bookmark><MapsIcon />Maps</Bookmark>
          <Bookmark><YoutubeIcon />YouTube</Bookmark>
        </BookmarkRow>
      </Toolbar>

      <PageRow>
        <Page>
          <Header>
            <OctoMark size={64} />
            <Search>
              Search or jump to...
              <SlashKey>/</SlashKey>
            </Search>
            <HeaderNav>
              <a>Pull requests</a>
              <a>Issues</a>
              <a>Marketplace</a>
              <a>Explore</a>
            </HeaderNav>
            <HeaderRight>
              <GoBell size={32} />
              <PlusGroup>
                <GoPlus size={32} />
                <HeadCaret $gap={8} />
              </PlusGroup>
              <HeadAvatar>
                <Identicon size={41} />
                <UnreadDot />
              </HeadAvatar>
              <HeadCaret $gap={6} />
            </HeaderRight>
          </Header>

          <RepoHead>
            <RepoTop>
              <RepoTitle>
                <GoRepo size={32} />
                <OwnerLink>Ashwini-1603</OwnerLink>
                <TitleSep>/</TitleSep>
                <NameLink>test</NameLink>
                <PublicBadge>Public</PublicBadge>
              </RepoTitle>
              <RepoActions>
                <ActionBtn $w={133}>
                  <GoPin size={30} color="#57606a" />
                  <BtnLabel $l={18}>Pin</BtnLabel>
                </ActionBtn>
                <ActionBtn $w={272}>
                  <GoEye size={30} color="#57606a" />
                  <BtnLabel $l={8}>Unwatch</BtnLabel>
                  <Counter $l={11} $w={39}>1</Counter>
                  <BtnCaret $l={12}><GoTriangleDown size={26} /></BtnCaret>
                </ActionBtn>
                <ActionBtn $w={203} $muted>
                  <GoRepoForked size={30} />
                  <BtnLabel $l={16}>Fork</BtnLabel>
                  <Counter $l={11} $w={43}>0</Counter>
                </ActionBtn>
                <ActionBtn $w={272}>
                  <GoStar size={30} color="#57606a" />
                  <BtnLabel $l={22}>Star</BtnLabel>
                  <Counter $l={11} $w={43}>0</Counter>
                  <StarSplit><GoTriangleDown size={26} /></StarSplit>
                </ActionBtn>
              </RepoActions>
            </RepoTop>
            <RepoTabs>
              {repoTabs.map(t => (
                <RepoTab key={t.label} $active={t.active} $hover={t.hover}>
                  {t.icon}
                  {t.label}
                </RepoTab>
              ))}
            </RepoTabs>
          </RepoHead>

          <Content>
            <BranchBtn>
              <GoGitBranch size={32} color="#57606a" />
              <BranchName>master</BranchName>
              <GoTriangleDown size={26} color="#57606a" />
            </BranchBtn>

            <Timeline>
              <DayHeader>
                <DayIcon><GoGitCommit size={32} /></DayIcon>
                Commits on Jun 6, 2022
              </DayHeader>
              <CommitBox>
                {commits.map((c, i) => (
                  <CommitRow key={c.sha} $first={i === 0}>
                    <div>
                      <CommitTitle>Added test.txt file in the test folder.</CommitTitle>
                      <CommitMeta>
                        <Identicon size={39} />
                        <Author>Ashwini-1603</Author>
                        committed {c.when}
                      </CommitMeta>
                    </div>
                    <CommitActions>
                      <BtnGroup>
                        <CopyCell><GoCopy size={34} /></CopyCell>
                        <ShaCell>{c.sha}</ShaCell>
                      </BtnGroup>
                      <CodeBtn><GoCode size={32} /></CodeBtn>
                    </CommitActions>
                  </CommitRow>
                ))}
              </CommitBox>
            </Timeline>

            <Pager>
              <PagerCell $w={150} $line>Newer</PagerCell>
              <PagerCell $w={137}>Older</PagerCell>
            </Pager>
          </Content>

          <Footer>
            <OctoMark size={48} color="#6e7781" />
            <FooterCopy>© 2022 GitHub, Inc.</FooterCopy>
            <FooterLinks>
              {footerLinks.map(l => <a key={l}>{l}</a>)}
            </FooterLinks>
          </Footer>

          <StatusTip>https://github.com/Ashwini-1603/test/wiki</StatusTip>
        </Page>
        <ScrollTrack><ScrollThumb /></ScrollTrack>
      </PageRow>
    </Window>

    <Desktop>
      <WallpaperArt>
        <filter id="waves">
          <feTurbulence type="fractalNoise" baseFrequency="0.04 0.2" numOctaves={3} seed={4} />
          <feColorMatrix type="matrix" values="0 0 0 0 0.2  0 0 0 0 0.38  0 0 0 0 0.52  1.1 0 0 0 -0.42" />
        </filter>
        <rect width="100%" height="100%" filter="url(#waves)" />
      </WallpaperArt>
      <Dock>
        {renderDock(dockMain)}
        <DockDivider />
        {renderDock(dockRunning)}
        <DockDivider />
        {renderDock(dockDocs)}
      </Dock>
    </Desktop>
  </Screen>
);

export default App;
